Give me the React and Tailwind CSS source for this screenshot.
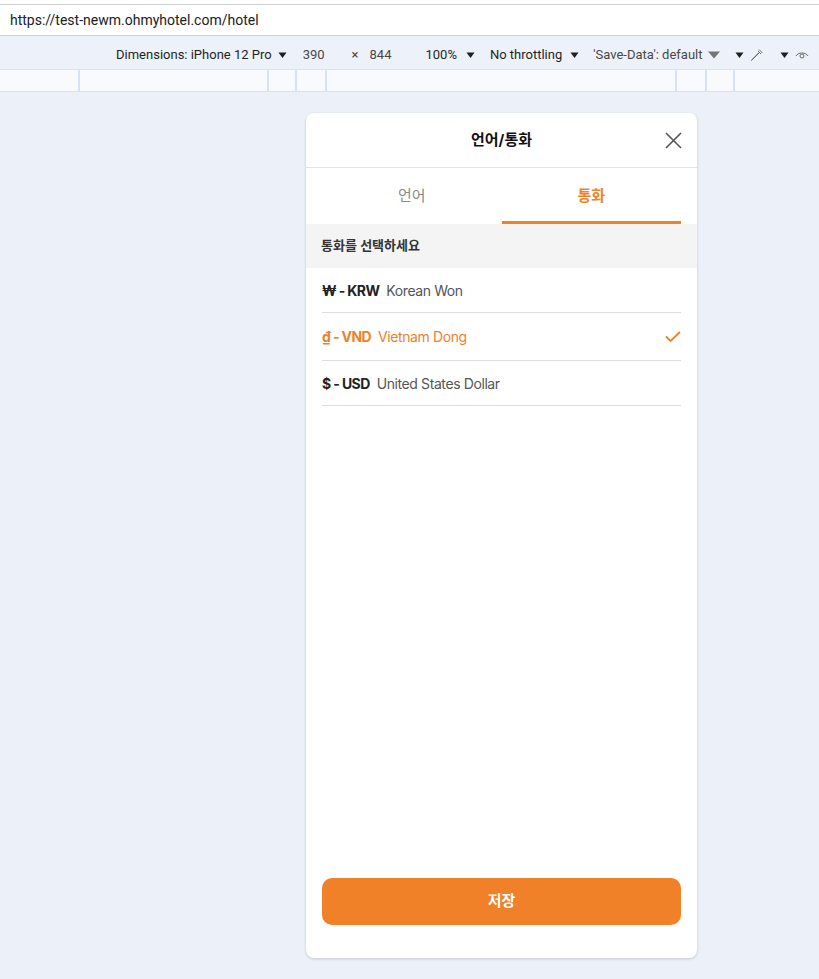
import React from "react";

const ui = { fontFamily: 'Roboto, "Noto Sans", sans-serif' };
const app = { fontFamily: 'Inter, "Noto Sans CJK KR", sans-serif' };

function Caret({ className = "" }) {
  return (
    <svg width="9" height="7" viewBox="0 0 9 7" className={`shrink-0 ${className}`}>
      <path d="M0.5 0.5 L8.5 0.5 L4.5 6 Z" fill="#1f1f1f" />
    </svg>
  );
}

const rows = [
  { sym: "₩ - KRW", name: "Korean Won", active: false, h: "h-[45px]" },
  { sym: "₫ - VND", name: "Vietnam Dong", active: true, h: "h-[48px]" },
  { sym: "$ - USD", name: "United States Dollar", active: false, h: "h-[45px]" },
];

export default function App() {
  return (
    <div className="w-[819px] h-[979px] bg-[#ecf0f8] flex flex-col overflow-hidden">
      {/* address bar */}
      <div className="h-[4px] bg-white" />
      <div className="h-[32px] bg-white border-t border-b border-[#d2d2d2] flex items-center pl-[10px] text-[14px] text-[#202124]" style={ui}>
        https://test-newm.ohmyhotel.com/hotel
      </div>
      {/* devtools toolbar */}
      <div className="h-[33px] pt-[5px] bg-[#edf2fa] flex items-center text-[13px] text-[#1f1f1f] whitespace-nowrap" style={ui}>
        <span className="ml-[116px] shrink-0">Dimensions: iPhone 12 Pro</span>
        <Caret className="ml-[6px]" />
        <span className="ml-[16px] text-[#474747] shrink-0">390</span>
        <span className="ml-[27px] text-[#474747] shrink-0">×</span>
        <span className="ml-[11px] text-[#474747] shrink-0">844</span>
        <span className="ml-[34px] shrink-0">100%</span>
        <Caret className="ml-[9px]" />
        <span className="ml-[15px] shrink-0">No throttling</span>
        <Caret className="ml-[8px]" />
        <span className="ml-[14px] text-[#474747] shrink-0">'Save-Data': default</span>
        <svg width="12" height="8" viewBox="0 0 12 8" className="ml-[6px] shrink-0">
          <path d="M0 0.5 L12 0.5 L6 7.5 Z" fill="#757575" />
        </svg>
        <Caret className="ml-[15px]" />
        <svg width="14" height="14" viewBox="0 0 14 14" className="ml-[6px] shrink-0" fill="none" stroke="#6b6b6b" strokeWidth="1">
          <path d="M9 1.5 L12.5 5 M8 3 L11 6 M9.5 4.5 L3 11 L1.5 12.5 L2.5 11 L9 4.5" />
        </svg>
        <Caret className="ml-[16px]" />
        <svg width="14" height="10" viewBox="0 0 14 10" className="ml-[6px] shrink-0" fill="none" stroke="#6b6b6b" strokeWidth="1">
          <path d="M1 6 C3 2 11 2 13 6" />
          <circle cx="7" cy="6" r="2" />
        </svg>
      </div>
      {/* ruler */}
      <div className="h-[23px] bg-[#f8fafd] border-t border-b border-[#d6e2f5] flex">
        <div className="w-[80px] border-r-2 border-[#d6e2f5]" />
        <div className="w-[189px] border-r-2 border-[#d6e2f5]" />
        <div className="w-[28px] border-r-2 border-[#d6e2f5]" />
        <div className="w-[30px] border-r-2 border-[#d6e2f5]" />
        <div className="w-[350px] border-r-2 border-[#d6e2f5]" />
        <div className="w-[30px] border-r-2 border-[#d6e2f5]" />
        <div className="w-[28px] border-r-2 border-[#d6e2f5]" />
        <div className="flex-1" />
      </div>

      {/* modal */}
      <div
        className="ml-[306px] mt-[21px] w-[391px] h-[845px] bg-white rounded-[8px] shadow-[0_1px_3px_rgba(0,0,0,0.18)] flex flex-col"
        style={app}
      >
        <div className="h-[55px] shrink-0 relative flex items-center justify-center border-b border-[#e3e3e3]">
          <span className="text-[15px] font-bold text-[#111]">언어/통화</span>
          <svg className="absolute right-[15px] top-[19px]" width="17" height="17" viewBox="0 0 17 17" fill="none" stroke="#555" strokeWidth="1.6">
            <path d="M1 1 L16 16 M16 1 L1 16" />
          </svg>
        </div>
        <div className="h-[56px] shrink-0 px-[16px] flex">
          <div className="flex-1 flex items-center justify-center text-[15px] text-[#8a8a8a]">언어</div>
          <div className="flex-1 flex items-center justify-center text-[15px] font-semibold text-[#f08129] border-b-[3px] border-[#f08129] pt-[3px]">통화</div>
        </div>
        <div className="h-[44px] shrink-0 bg-[#f4f4f4] flex items-center pl-[15px] text-[13px] font-semibold text-[#333]">
          통화를 선택하세요
        </div>
        <div className="px-[16px]">
          {rows.map((r) => (
            <div key={r.sym} className={`${r.h} border-b border-[#dedede] flex items-center text-[14px]`}>
              <span className={`font-bold tracking-[-0.6px] ${r.active ? "text-[#f08129]" : "text-[#222]"}`}>{r.sym}</span>
              <span className={`ml-[7px] tracking-[-0.4px] ${r.active ? "text-[#f08129]" : "text-[#555]"}`}>{r.name}</span>
              {r.active && (
                <svg className="ml-auto" width="16" height="12" viewBox="0 0 16 12" fill="none" stroke="#f08129" strokeWidth="1.8">
                  <path d="M1 5.5 L5.5 10 L15 1" />
                </svg>
              )}
            </div>
          ))}
        </div>
        <div className="flex-1" />
        <div className="px-[16px] pb-[33px]">
          <button className="w-full h-[47px] rounded-[10px] bg-[#f08129] text-white text-[15px] font-bold">저장</button>
        </div>
      </div>
    </div>
  );
}
